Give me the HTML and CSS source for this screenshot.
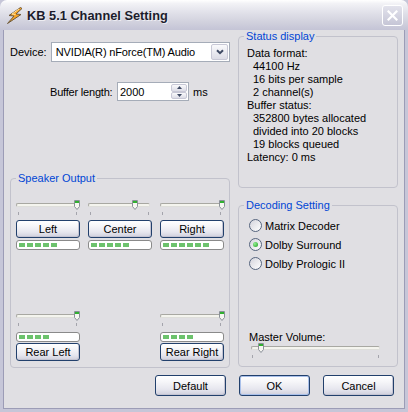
FILE: index.html
```html
<!DOCTYPE html>
<html>
<head>
<meta charset="utf-8">
<title>KB 5.1 Channel Setting</title>
<link rel="stylesheet" href="styles.css">
</head>
<body>
<div class="window">
    <div class="titlebar">
        <svg class="app-icon" width="19" height="19" viewBox="0 0 19 19">
            <path d="M15.5 1.5 L4 9.5 L9 10 L2.5 17.5 L16 8.5 L11 8 L17 2.5 Z" fill="#f6a325" stroke="#6e5a3c" stroke-width="1" stroke-linejoin="round"/>
            <path d="M14 3 L7 8 L10.5 8.5" fill="none" stroke="#ffe2a0" stroke-width="1"/>
        </svg>
        <span class="title">KB 5.1 Channel Setting</span>
        <span class="close-btn">
            <svg width="11" height="11" viewBox="0 0 11 11"><path d="M1.5 1.5 L9.5 9.5 M9.5 1.5 L1.5 9.5" stroke="#fff" stroke-width="2.2" stroke-linecap="square"/></svg>
        </span>
    </div>
    <div class="client">
        <div class="left-col">
            <div class="device-row">
                <span class="device-label">Device:</span>
                <div class="combo">
                    <span class="combo-text">NVIDIA(R) nForce(TM) Audio</span>
                    <span class="combo-btn"><svg width="8" height="6" viewBox="0 0 8 6"><path d="M1 1.2 L4 4.2 L7 1.2" fill="none" stroke="#3f4a64" stroke-width="2"/></svg></span>
                </div>
            </div>
            <div class="buffer-row">
                <span class="buffer-label">Buffer length:</span>
                <div class="spin">
                    <span class="spin-text">2000</span>
                    <span class="spin-btns">
                        <span><svg width="5" height="3" viewBox="0 0 5 3"><path d="M0 3 L2.5 0 L5 3 Z" fill="#3f4a64"/></svg></span>
                        <span><svg width="5" height="3" viewBox="0 0 5 3"><path d="M0 0 L2.5 3 L5 0 Z" fill="#3f4a64"/></svg></span>
                    </span>
                </div>
                <span class="unit">ms</span>
            </div>
            <fieldset class="group speaker-group">
                <legend>Speaker Output</legend>
                <div class="front-row">
                    <div class="channel">
                        <div class="slider">
                            <div class="track"></div>
                            <svg class="thumb" style="left:58px" width="6" height="10" viewBox="0 0 6 10"><path d="M0.5 0.5H5.5V6.5L3 9.5L0.5 6.5Z" fill="#f6f6f2" stroke="#8a9098"/><rect x="1" y="1" width="4" height="2" fill="#30b030"/></svg>
                            <span class="tick tick-l"></span><span class="tick tick-r"></span>
                        </div>
                        <div class="xp-btn ch-btn">Left</div>
                        <div class="level"><span></span><span></span><span></span><span></span><span></span></div>
                    </div>
                    <div class="channel">
                        <div class="slider">
                            <div class="track"></div>
                            <svg class="thumb" style="left:44px" width="6" height="10" viewBox="0 0 6 10"><path d="M0.5 0.5H5.5V6.5L3 9.5L0.5 6.5Z" fill="#f6f6f2" stroke="#8a9098"/><rect x="1" y="1" width="4" height="2" fill="#30b030"/></svg>
                            <span class="tick tick-l"></span><span class="tick tick-r"></span>
                        </div>
                        <div class="xp-btn ch-btn">Center</div>
                        <div class="level"><span></span><span></span><span></span><span></span><span></span></div>
                    </div>
                    <div class="channel">
                        <div class="slider">
                            <div class="track"></div>
                            <svg class="thumb" style="left:59px" width="6" height="10" viewBox="0 0 6 10"><path d="M0.5 0.5H5.5V6.5L3 9.5L0.5 6.5Z" fill="#f6f6f2" stroke="#8a9098"/><rect x="1" y="1" width="4" height="2" fill="#30b030"/></svg>
                            <span class="tick tick-l"></span><span class="tick tick-r"></span>
                        </div>
                        <div class="xp-btn ch-btn">Right</div>
                        <div class="level"><span></span><span></span><span></span><span></span><span></span><span></span></div>
                    </div>
                </div>
                <div class="rear-row">
                    <div class="channel">
                        <div class="slider">
                            <div class="track"></div>
                            <svg class="thumb" style="left:58px" width="6" height="10" viewBox="0 0 6 10"><path d="M0.5 0.5H5.5V6.5L3 9.5L0.5 6.5Z" fill="#f6f6f2" stroke="#8a9098"/><rect x="1" y="1" width="4" height="2" fill="#30b030"/></svg>
                            <span class="tick tick-l"></span><span class="tick tick-r"></span>
                        </div>
                        <div class="level rear-level"><span></span><span></span><span></span><span></span></div>
                        <div class="xp-btn rear-btn">Rear Left</div>
                    </div>
                    <div class="channel">
                        <div class="slider">
                            <div class="track"></div>
                            <svg class="thumb" style="left:59px" width="6" height="10" viewBox="0 0 6 10"><path d="M0.5 0.5H5.5V6.5L3 9.5L0.5 6.5Z" fill="#f6f6f2" stroke="#8a9098"/><rect x="1" y="1" width="4" height="2" fill="#30b030"/></svg>
                            <span class="tick tick-l"></span><span class="tick tick-r"></span>
                        </div>
                        <div class="level rear-level"><span></span><span></span><span></span><span></span></div>
                        <div class="xp-btn rear-btn">Rear Right</div>
                    </div>
                </div>
            </fieldset>
        </div>
        <div class="right-col">
            <fieldset class="group status-group">
                <legend>Status display</legend>
                <div class="status-lines">
                    <div>Data format:</div>
                    <div class="sub">44100 Hz</div>
                    <div class="sub">16 bits per sample</div>
                    <div class="sub">2 channel(s)</div>
                    <div>Buffer status:</div>
                    <div class="sub">352800 bytes allocated</div>
                    <div class="sub">divided into 20 blocks</div>
                    <div class="sub">19 blocks queued</div>
                    <div>Latency: 0 ms</div>
                </div>
            </fieldset>
            <fieldset class="group decoding-group">
                <legend>Decoding Setting</legend>
                <div class="radios">
                    <div class="radio"><span class="radio-dot"></span>Matrix Decoder</div>
                    <div class="radio"><span class="radio-dot on"></span>Dolby Surround</div>
                    <div class="radio"><span class="radio-dot"></span>Dolby Prologic II</div>
                </div>
                <div class="master-label">Master Volume:</div>
                <div class="slider master-slider">
                    <div class="track"></div>
                    <svg class="thumb" style="left:7px" width="6" height="10" viewBox="0 0 6 10"><path d="M0.5 0.5H5.5V6.5L3 9.5L0.5 6.5Z" fill="#f6f6f2" stroke="#8a9098"/><rect x="1" y="1" width="4" height="2" fill="#30b030"/></svg>
                    <span class="tick tick-l"></span><span class="tick tick-r"></span>
                </div>
            </fieldset>
        </div>
        <div class="button-row">
            <div class="xp-btn dlg-btn">Default</div>
            <div class="xp-btn dlg-btn is-default">OK</div>
            <div class="xp-btn dlg-btn">Cancel</div>
        </div>
    </div>
</div>
</body>
</html>
```

FILE: styles.css
```css
* {
    box-sizing: border-box;
}
html, body {
    margin: 0;
    padding: 0;
}
body {
    width: 408px;
    height: 412px;
    overflow: hidden;
    font-family: "Liberation Sans", Arial, sans-serif;
    font-size: 11px;
    color: #000;
    background: #c6c6d8;
}
.window {
    width: 408px;
    height: 412px;
    display: flex;
    flex-direction: column;
    background: #c6c6d8;
}

/* title bar */
.titlebar {
    height: 30px;
    flex: none;
    display: flex;
    align-items: center;
    padding: 0 5px 0 5px;
    border-radius: 7px 7px 0 0;
    background: linear-gradient(to bottom, #ffffff 0%, #f2f2f6 12%, #e2e2ea 40%, #d2d2de 72%, #c4c4d6 100%);
}
.app-icon {
    flex: none;
    margin-top: 1px;
}
.title {
    flex: 1;
    margin-left: 3px;
    font-weight: bold;
    font-size: 12.8px;
    color: #1c1c2c;
    text-shadow: 1px 1px 0 rgba(255, 255, 255, 0.6);
}
.close-btn {
    width: 21px;
    height: 21px;
    margin-top: 1px;
    display: flex;
    align-items: center;
    justify-content: center;
    border: 1px solid #fff;
    border-radius: 3px;
    background: linear-gradient(to bottom, #e2e2ec, #c6c6d6);
}

/* client area */
.client {
    flex: 1;
    margin: 0 3px 3px;
    border: 1px solid #9c9cb6;
    border-top: none;
    background: #e0dfe3;
    display: grid;
    grid-template-columns: 220px 160px;
    grid-template-rows: 337px auto;
    column-gap: 8px;
    padding: 0 6px;
}
.left-col {
    display: flex;
    flex-direction: column;
    padding-top: 12px;
}
.right-col {
    display: flex;
    flex-direction: column;
}

.device-row {
    display: flex;
    align-items: center;
    height: 20px;
}
.device-label {
    width: 41px;
}
.combo {
    width: 180px;
    height: 20px;
    border: 1px solid #a5acb8;
    background: #fff;
    display: flex;
    align-items: center;
    padding: 0 1px 0 4px;
}
.combo-text {
    flex: 1;
    letter-spacing: -0.15px;
}
.combo-btn {
    width: 17px;
    height: 16px;
    display: flex;
    align-items: center;
    justify-content: center;
    border: 1px solid #c8c8d6;
    border-radius: 2px;
    background: linear-gradient(to bottom, #fafafc, #dcdce6);
}

.buffer-row {
    display: flex;
    align-items: center;
    height: 19px;
    margin-top: 20px;
    padding-left: 40px;
}
.buffer-label {
    width: 67px;
    white-space: nowrap;
    letter-spacing: -0.2px;
}
.spin {
    width: 72px;
    height: 19px;
    border: 1px solid #a5acb8;
    background: #fff;
    display: flex;
    padding: 1px;
}
.spin-text {
    flex: 1;
    padding-left: 1px;
    display: flex;
    align-items: center;
}
.spin-btns {
    width: 16px;
    display: flex;
    flex-direction: column;
}
.spin-btns span {
    flex: 1;
    display: flex;
    align-items: center;
    justify-content: center;
    border: 1px solid #c8c8d6;
    border-radius: 2px;
    background: linear-gradient(to bottom, #fafafc, #dcdce6);
}
.unit {
    margin-left: 4px;
}

/* group boxes */
.group {
    margin: 0;
    padding: 0 5px 6px;
    min-width: 0;
    border: 1px solid #c2c2cc;
    border-radius: 4px;
}
.group legend {
    padding: 0 2px;
    line-height: 13px;
    color: #0046d5;
}
.speaker-group {
    flex: 1;
    margin-top: 71px;
}
.status-group {
    height: 158px;
}
.decoding-group {
    flex: 1;
    margin-top: 11px;
}

.status-lines {
    margin-top: 4px;
    padding-left: 3px;
    line-height: 13px;
}
.status-lines .sub {
    padding-left: 6px;
}

/* speaker channels */
.front-row {
    display: flex;
    gap: 8px;
    margin-top: 13px;
}
.rear-row {
    display: flex;
    justify-content: space-between;
    margin-top: 59px;
}
.channel {
    width: 64px;
    display: flex;
    flex-direction: column;
}
.slider {
    position: relative;
    height: 18px;
    width: 62px;
}
.track {
    position: absolute;
    left: 0;
    right: 0;
    top: 5px;
    height: 4px;
    border: 1px solid;
    border-color: #a8a8a2 #dededa #dededa #a8a8a2;
    border-radius: 2px;
    background: #f4f4ee;
}
.thumb {
    position: absolute;
    top: 2px;
}
.tick {
    position: absolute;
    top: 14px;
    width: 1px;
    height: 3px;
    background: #a4a4ac;
}
.tick-l {
    left: 2px;
}
.tick-r {
    right: 1px;
}

.xp-btn {
    display: flex;
    align-items: center;
    justify-content: center;
    border: 1px solid #22406c;
    border-radius: 3px;
    background: linear-gradient(to bottom, #ffffff 0%, #f6f6f9 30%, #e6e6ee 70%, #cfcfdc 100%);
    box-shadow: inset -1px -1px 0 #c4c4d2;
}
.ch-btn {
    height: 18px;
    margin-top: 4px;
}
.rear-btn {
    height: 18px;
    margin-top: 1px;
}
.level {
    height: 10px;
    margin-top: 2px;
    border: 1px solid #8a8a8a;
    border-radius: 3px;
    background: #fff;
    display: flex;
    align-items: center;
    gap: 2px;
    padding-left: 2px;
}
.rear-level {
    margin-top: 5px;
}
.level span {
    width: 6px;
    height: 4px;
    background: #6cc26c;
}

/* decoding */
.radios {
    margin-top: 4px;
    padding-left: 5px;
}
.radio {
    display: flex;
    align-items: center;
    height: 19px;
}
.radio-dot {
    width: 13px;
    height: 13px;
    margin-right: 3px;
    border-radius: 50%;
    border: 1px solid #56657e;
    background: linear-gradient(135deg, #d4d4dc, #ffffff);
    display: flex;
    align-items: center;
    justify-content: center;
}
.radio-dot.on::after {
    content: "";
    width: 5px;
    height: 5px;
    border-radius: 50%;
    background: radial-gradient(circle at 35% 35%, #92ee92, #1f9f1f);
}
.master-label {
    margin-top: 58px;
    padding-left: 5px;
    line-height: 13px;
}
.master-slider {
    width: 129px;
    margin-left: 7px;
    margin-top: -3px;
}
.master-slider .tick-l {
    left: 1px;
}

/* dialog buttons */
.button-row {
    grid-column: 1 / -1;
    display: flex;
    justify-content: flex-end;
    gap: 13px;
    padding-top: 8px;
    padding-right: 4px;
}
.dlg-btn {
    width: 71px;
    height: 21px;
}
.dlg-btn.is-default {
    box-shadow: inset 0 0 0 1px #a9c0ea, inset -1px -1px 0 #c4c4d2;
}
```
